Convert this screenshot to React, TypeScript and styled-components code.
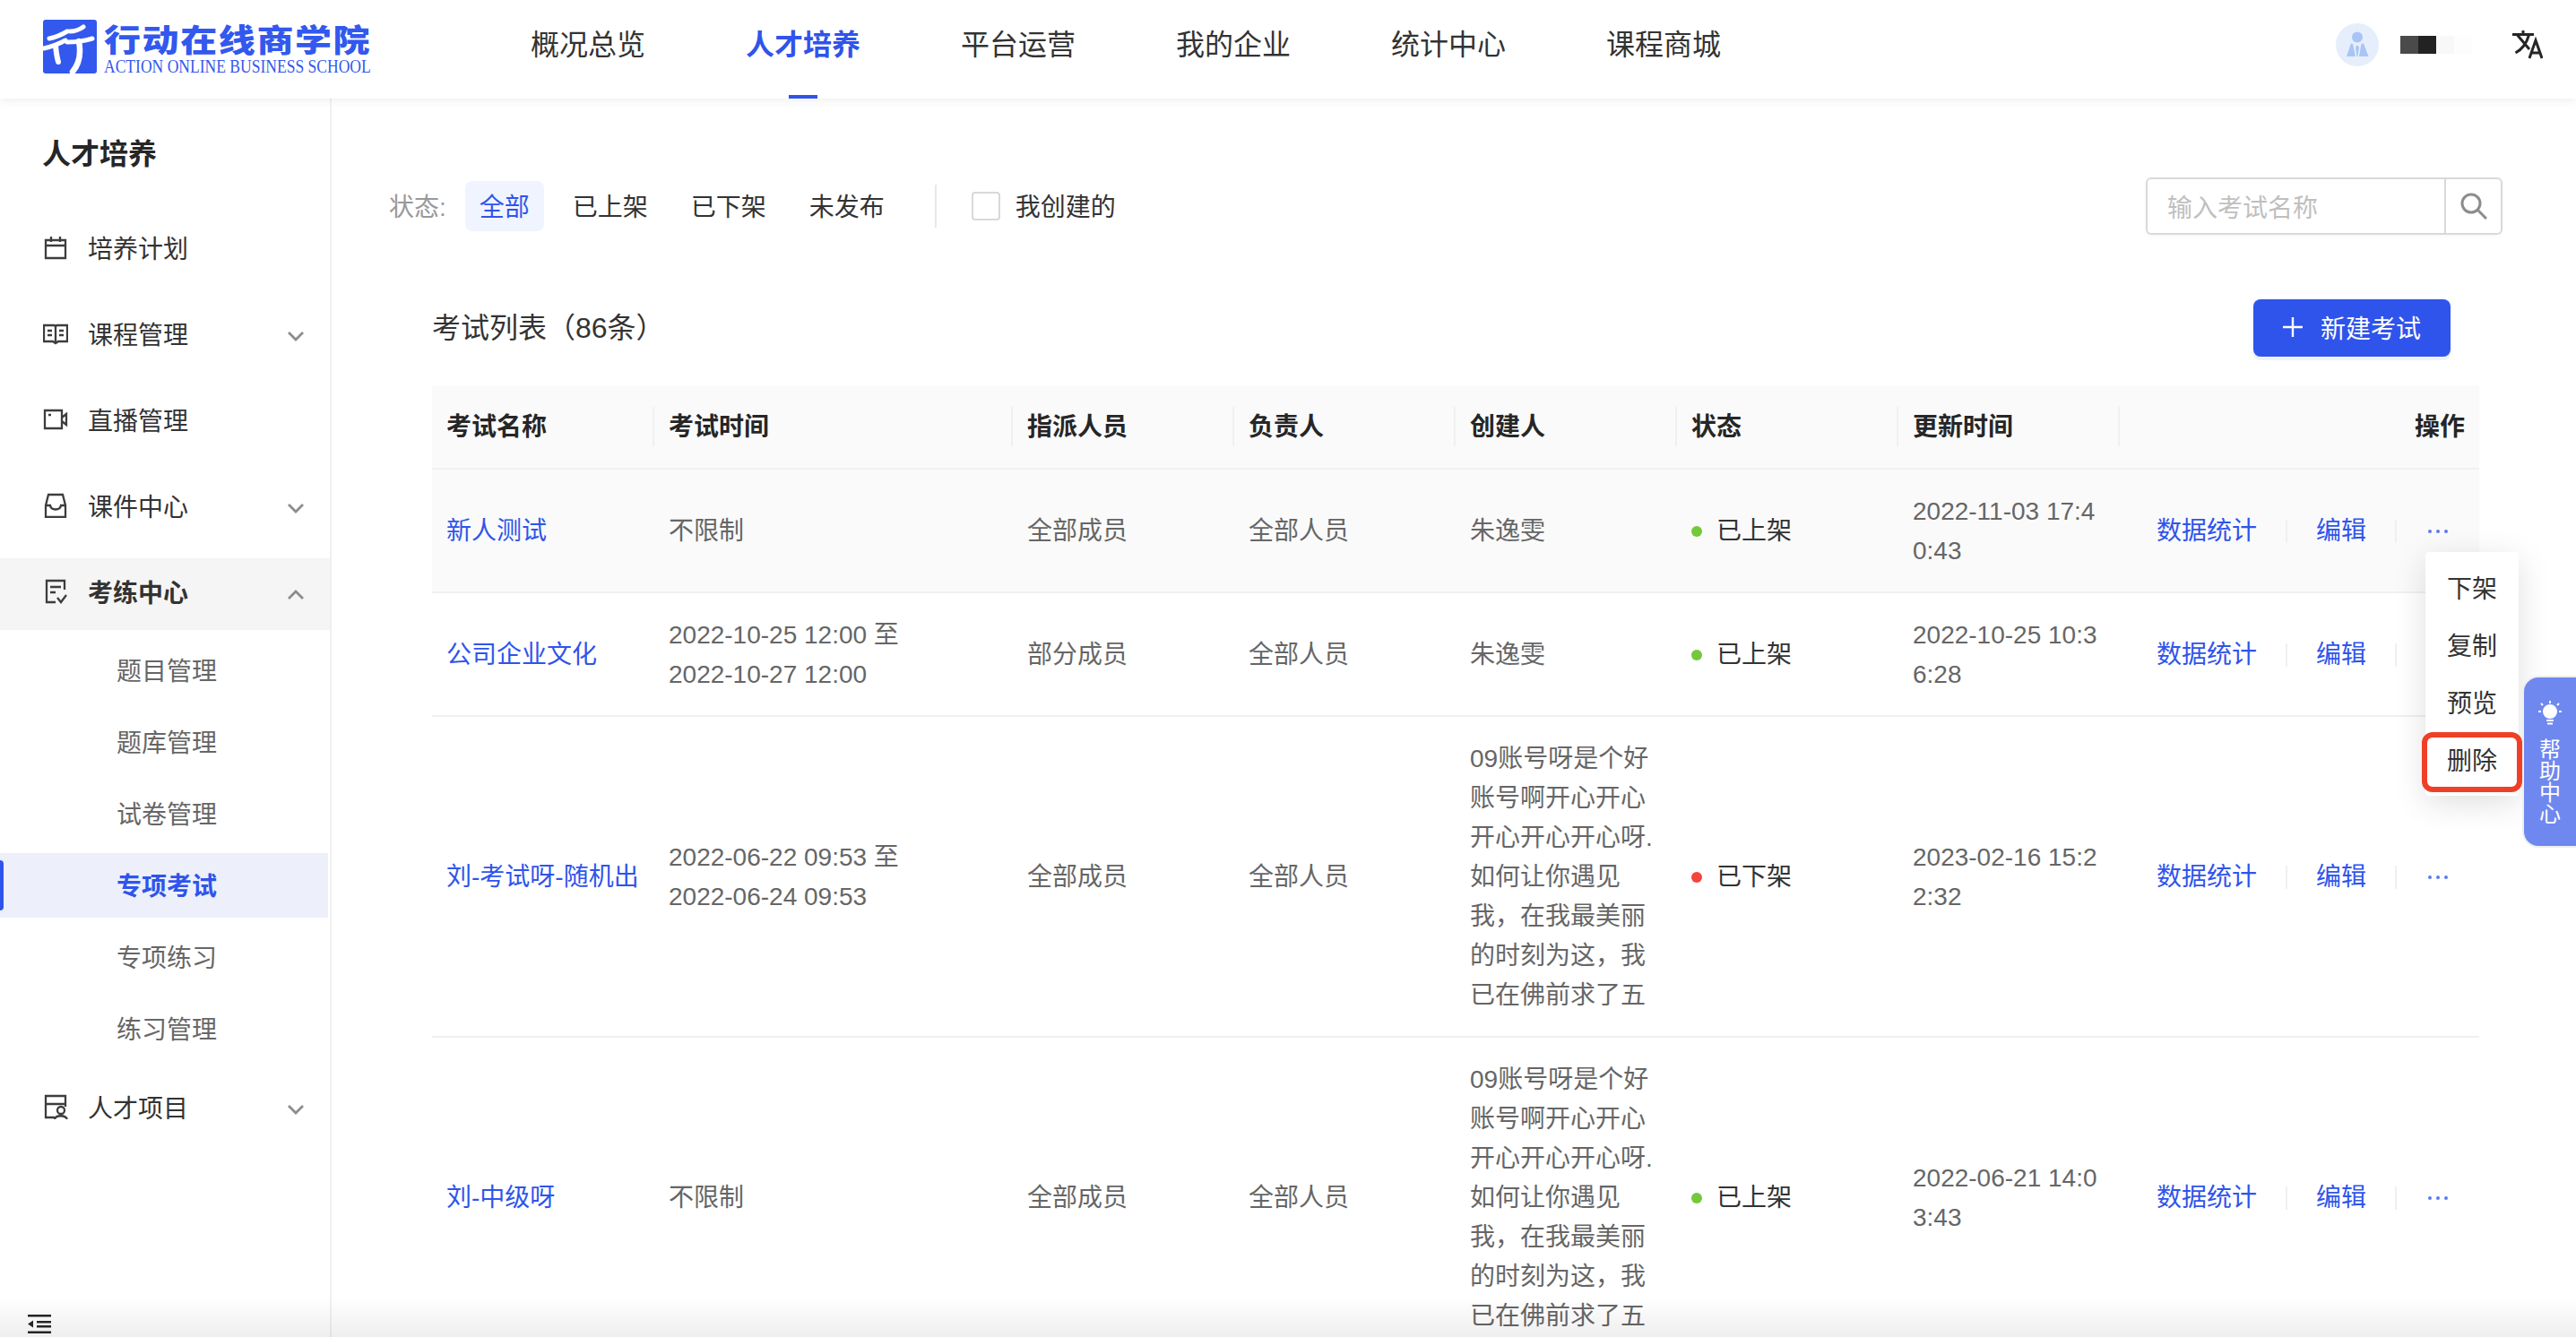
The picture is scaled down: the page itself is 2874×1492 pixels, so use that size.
import React from 'react';
import styled, { createGlobalStyle } from 'styled-components';

const blue = '#2f54eb';

const Global = createGlobalStyle`
  html, body { margin: 0; padding: 0; height: 100%; overflow: hidden; background: #fff; }
  body { font-family: "Liberation Sans", "Noto Sans CJK SC", sans-serif; font-size: 28px; color: #333; -webkit-font-smoothing: antialiased; }
  #root { height: 100%; }
  * { box-sizing: border-box; }
`;

const Page = styled.div`
  position: relative; height: 1492px; display: flex; flex-direction: column; overflow: hidden;
`;
const BottomFade = styled.div`
  position: absolute; left: 0; right: 0; bottom: 0; height: 44px; pointer-events: none; z-index: 3;
  background: linear-gradient(rgba(0,0,0,0), rgba(0,0,0,.065));
`;

const Header = styled.header`
  height: 110px; flex: none; display: flex; align-items: center; padding: 0 37px 0 48px; background: #fff;
  box-shadow: 0 2px 10px rgba(0,0,0,.07); position: relative; z-index: 2;
`;
const Logo = styled.div`
  width: 544px; flex: none; display: flex; align-items: center; gap: 8px; padding-bottom: 6px;
`;
const LogoText = styled.div`
  display: flex; flex-direction: column; width: 298px; height: 60px; padding-top: 2px; color: #3358ee;
`;
const LogoCn = styled.div`
  font-family: "Noto Sans CJK SC", sans-serif; font-weight: 900; font-size: 41px; line-height: 38px; height: 38px;
  letter-spacing: 1.6px; white-space: nowrap; transform: scaleY(.86);
`;
const LogoEn = styled.div`
  font-family: "Liberation Serif", serif; font-size: 20px; line-height: 20px; white-space: nowrap;
  transform: scaleX(.877); transform-origin: left center; margin-top: 2px;
`;
const TopNav = styled.nav`
  display: flex; gap: 112px;
`;
const TopItem = styled.a<{ $active?: boolean }>`
  position: relative; height: 110px; width: 128px; display: flex; align-items: center; justify-content: center; padding-bottom: 16px;
  font-size: 32px; white-space: nowrap; color: ${p => (p.$active ? blue : '#333')}; font-weight: ${p => (p.$active ? 600 : 400)};
  ${p => p.$active && `&::after { content: ""; position: absolute; left: 48px; bottom: 0; width: 32px; height: 4px; background: ${blue}; }`}
`;
const UserArea = styled.div`
  margin-left: auto; display: flex; align-items: center; padding-bottom: 10px;
`;
const Avatar = styled.div`
  width: 48px; height: 48px; border-radius: 50%; background: #e6eefc; display: flex;
`;
const Mosaic = styled.div`
  display: flex; margin: 0 45px 0 24px;
`;
const Tile = styled.span<{ $c: string }>`
  width: 20px; height: 20px; background: ${p => p.$c};
`;

const Body = styled.div`
  flex: 1; display: flex; min-height: 0;
`;
const Sidebar = styled.aside`
  width: 370px; flex: none; border-right: 2px solid #f0f0f0; padding-top: 40px; display: flex; flex-direction: column;
`;
const SideTitle = styled.h2`
  margin: 0 0 45px 47px; font-size: 32px; line-height: 44px; font-weight: 700; color: #262626;
`;
const SideNav = styled.div`
  display: flex; flex-direction: column; gap: 16px;
`;
const SideItem = styled.div<{ $open?: boolean }>`
  height: 80px; display: flex; align-items: center; gap: 22px; padding: 0 29px 6px 48px;
  color: #333; font-weight: ${p => (p.$open ? 700 : 400)};
  background: ${p => (p.$open ? '#f5f5f5' : 'transparent')};
`;
const Chevron = styled.svg`
  margin: 6px 0 0 auto; flex: none;
`;
const SubList = styled.div`
  display: flex; flex-direction: column; gap: 8px; padding-top: 9px; margin-bottom: -2px; margin-right: 2px;
`;
const SubItem = styled.div<{ $active?: boolean }>`
  position: relative; height: 72px; display: flex; align-items: center; padding: 0 0 3px 130px;
  color: ${p => (p.$active ? blue : '#666')}; font-weight: ${p => (p.$active ? 700 : 400)};
  background: ${p => (p.$active ? '#edf0fb' : 'transparent')};
  ${p => p.$active && `&::before { content: ""; position: absolute; left: 0; top: 8px; width: 4px; height: 56px; background: ${blue}; border-radius: 0 4px 4px 0; }`}
`;
const Collapse = styled.div`
  margin-top: auto; padding: 0 0 4px 31px; display: flex;
`;

const Main = styled.main`
  flex: 1; min-width: 0; padding: 88px 82px 0 64px; overflow: hidden;
`;
const FilterBar = styled.div`
  display: flex; align-items: center; height: 64px;
`;
const FilterLabel = styled.span`
  color: #999; margin-right: 21px; padding-bottom: 2px;
`;
const Chips = styled.div`
  display: flex; gap: 16px;
`;
const Chip = styled.span<{ $active?: boolean }>`
  height: 56px; padding: 0 16px 2px; display: flex; align-items: center; border-radius: 8px;
  color: ${p => (p.$active ? blue : '#333')}; background: ${p => (p.$active ? '#f0f4fe' : 'transparent')};
`;
const VLine = styled.span`
  width: 2px; height: 48px; background: #e8e8e8; margin: 0 39px 0 40px;
`;
const CheckBox = styled.span`
  width: 32px; height: 32px; border: 2px solid #d9d9d9; border-radius: 4px; margin-right: 17px;
`;
const CheckLabel = styled.span`
  padding-bottom: 2px;
`;
const SearchBox = styled.div`
  margin-left: auto; width: 398px; height: 64px; display: flex; border: 2px solid #d9d9d9; border-radius: 6px;
  box-shadow: 0 2px 4px rgba(0,0,0,.03);
`;
const SearchInput = styled.input`
  flex: 1; min-width: 0; border: 0; outline: 0; padding: 6px 0 0 22px; font: inherit; background: transparent; color: #333;
  &::placeholder { color: #bfbfbf; opacity: 1; }
`;
const SearchBtn = styled.div`
  width: 63px; flex: none; border-left: 2px solid #d9d9d9; display: flex; align-items: center; justify-content: center;
`;

const ListArea = styled.section`
  margin: 72px 26px 0 48px;
`;
const ListHead = styled.div`
  display: flex; align-items: center; justify-content: space-between; height: 64px; padding-right: 32px; margin-bottom: 32px;
`;
const ListTitle = styled.h3`
  margin: 0; padding-bottom: 7px; font-size: 32px; font-weight: 400; color: #333;
`;
const PrimaryBtn = styled.button`
  width: 220px; height: 64px; border: 0; padding: 0 0 2px; border-radius: 8px; background: ${blue}; color: #fff; font: inherit;
  display: flex; align-items: center; justify-content: center; gap: 20px; box-shadow: 0 4px 0 #f0f2f5;
`;

const cols = '246px 400px 247px 247px 247px 247px 247px 403px';
const HeadRow = styled.div`
  display: grid; grid-template-columns: ${cols}; align-items: center; padding: 24px 0; background: #fafafa; border-bottom: 2px solid #f0f0f0;
`;
const HeadCell = styled.div<{ $line?: boolean; $right?: boolean }>`
  height: 44px; line-height: 46px; padding: 0 16px; font-weight: 700; color: #262626;
  border-left: ${p => (p.$line ? '2px solid #f0f0f0' : '0')}; text-align: ${p => (p.$right ? 'right' : 'left')};
`;
const Row = styled.div<{ $hover?: boolean }>`
  display: grid; grid-template-columns: ${cols}; align-items: center; padding: 25px 0 23px; border-bottom: 2px solid #f0f0f0;
  background: ${p => (p.$hover ? '#fafafa' : '#fff')};
`;
const Cell = styled.div`
  padding: 0 16px 0 18px; line-height: 44px; color: #666; word-break: break-all;
`;
const TimeCell = styled(Cell)`
  white-space: pre-line;
`;
const NameLink = styled.div`
  padding-left: 16px; line-height: 44px; color: ${blue}; white-space: nowrap;
`;
const StatusCell = styled.div`
  padding-left: 18px; display: flex; align-items: center; gap: 16px; color: #333; line-height: 44px;
`;
const Dot = styled.span<{ $c: string }>`
  width: 12px; height: 12px; border-radius: 50%; background: ${p => p.$c};
`;
const Ops = styled.div`
  padding-left: 43px; display: flex; align-items: center; gap: 32px; color: ${blue}; line-height: 44px; white-space: nowrap;
`;
const OpLine = styled.span`
  width: 2px; height: 26px; background: #f0f0f0;
`;
const More = styled.span`
  display: flex; gap: 5px; margin-left: 3px;
`;
const MoreDot = styled.span`
  width: 4px; height: 4px; border-radius: 50%; background: #5b7bf0;
`;

const Dropdown = styled.div`
  position: absolute; left: 2706px; top: 616px; width: 104px; padding: 8px 0; background: #fff; border-radius: 4px; z-index: 4;
  box-shadow: 0 8px 36px rgba(0,0,0,.13);
`;
const DropItem = styled.div<{ $marked?: boolean }>`
  position: relative; height: 64px; display: flex; align-items: center; justify-content: center; padding-bottom: 3px; color: #333;
  ${p => p.$marked && `&::after { content: ""; position: absolute; left: -4px; right: -4px; top: 1px; bottom: -4px; border: 6px solid #ee4027; border-radius: 12px; }`}
`;
const HelpTab = styled.div`
  position: absolute; right: 0; top: 754px; width: 60px; height: 192px; z-index: 4; background: #6f88ef; color: #fff;
  border: 2px solid #eee; border-right: 0; border-radius: 18px 0 0 18px; display: flex; flex-direction: column; align-items: center;
  padding-top: 26px; font-size: 24px; line-height: 24px;
`;
const HelpText = styled.div`
  width: 24px; margin-top: 15px; text-align: center; word-break: break-all;
`;

const Arrow = ({ up }: { up?: boolean }) => (
  <Chevron width="18" height="11" viewBox="0 0 18 11" fill="none" stroke="#8c8c8c" strokeWidth="2.8">
    <path d={up ? 'M1 10l8-8 8 8' : 'M1 1l8 8 8-8'} />
  </Chevron>
);

const Ico = ({ children }: { children: React.ReactNode }) => (
  <svg width="28" height="28" viewBox="0 0 28 28" fill="none" stroke="#3d3d3d" strokeWidth="2.3" style={{ flex: 'none' }}>{children}</svg>
);

const icons = {
  plan: <Ico><path d="M3 6h22v20H3zM3 12h22M9 2v6M19 2v6" /></Ico>,
  course: <Ico><path d="M1 5h11c1 0 2 1 2 2 0-1 1-2 2-2h11v18H17l-3 2-3-2H1zM14 7v17M5 11h5M5 16h5M18 11h5M18 16h5" /></Ico>,
  live: <Ico><path d="M2 4h19v20H2zM6 9h3M21 12l5-4v12l-5-4" /></Ico>,
  ware: <Ico><path d="M3 14 6 2h16l3 12v13H3zM3 14h5c1 6 11 6 12 0h5" /></Ico>,
  exam: <Ico><path d="M24 12V2H4v24h10M8 9h12M8 15h6M16 21l4 5 6-8" /></Ico>,
  proj: <Ico><path d="M13 26H3V2h22v12M3 11h22M13 28c1-5 12-5 14 0" /><circle cx="20" cy="18" r="4" /></Ico>,
};

const LogoMark = () => (
  <svg width="60" height="60" viewBox="0 0 60 60" style={{ flex: 'none' }}>
    <rect width="60" height="60" rx="3" fill="#3358ee" />
    <g fill="none" stroke="#fff" strokeLinecap="round">
      <path d="M7 21 Q17 19 27 13" strokeWidth="5" />
      <path d="M1 32 Q14 29 25 23" strokeWidth="5" />
      <path d="M14 29 Q15 40 17 47" strokeWidth="6" />
      <path d="M30 13 Q38 13 45 8" strokeWidth="5" />
      <path d="M27 25 Q42 25 55 21" strokeWidth="5" />
      <path d="M40 24 Q44 45 33 58" strokeWidth="6.5" />
    </g>
  </svg>
);

const creator = '09账号呀是个好账号啊开心开心开心开心开心呀.如何让你遇见我，在我最美丽的时刻为这，我已在佛前求了五';

const rows = [
  { name: '新人测试', time: '不限制', who: '全部成员', owner: '全部人员', by: '朱逸雯', on: true, up: '2022-11-03 17:40:43', hover: true },
  { name: '公司企业文化', time: '2022-10-25 12:00 至\n2022-10-27 12:00', who: '部分成员', owner: '全部人员', by: '朱逸雯', on: true, up: '2022-10-25 10:36:28' },
  { name: '刘-考试呀-随机出', time: '2022-06-22 09:53 至\n2022-06-24 09:53', who: '全部成员', owner: '全部人员', by: creator, on: false, up: '2023-02-16 15:22:32' },
  { name: '刘-中级呀', time: '不限制', who: '全部成员', owner: '全部人员', by: creator, on: true, up: '2022-06-21 14:03:43' },
];

export default function App() {
  return (
    <Page>
      <Global />
      <Header>
        <Logo>
          <LogoMark />
          <LogoText>
            <LogoCn>行动在线商学院</LogoCn>
            <LogoEn>ACTION ONLINE BUSINESS SCHOOL</LogoEn>
          </LogoText>
        </Logo>
        <TopNav>
          {['概况总览', '人才培养', '平台运营', '我的企业', '统计中心', '课程商城'].map((t, i) => (
            <TopItem key={t} $active={i === 1}>{t}</TopItem>
          ))}
        </TopNav>
        <UserArea>
          <Avatar>
            <svg width="48" height="48" viewBox="0 0 48 48" fill="#a9c4f5">
              <circle cx="24" cy="15.5" r="6" />
              <path d="M17 22.5 12 37h10l-3-14zM31 22.5 36.500 37H26l2.500-14zM24 24l2 3-1.500 10h-1L22 27z" />
            </svg>
          </Avatar>
          <Mosaic>
            <Tile $c="#4a4a4a" /><Tile $c="#222222" /><Tile $c="#f8f8f8" /><Tile $c="#fdfdfd" />
          </Mosaic>
          <svg width="34" height="32" viewBox="0 0 34 32" fill="none" stroke="#262626" strokeWidth="3">
            <path d="M0 4.500h24M12 0v4.500M5.500 5 19 21M18.500 5C16 14 11 21 3.500 25M19 31 26 11l7 20M21.500 25h9" />
          </svg>
        </UserArea>
      </Header>
      <Body>
        <Sidebar>
          <SideTitle>人才培养</SideTitle>
          <SideNav>
            <SideItem>{icons.plan}培养计划</SideItem>
            <SideItem>{icons.course}课程管理<Arrow /></SideItem>
            <SideItem>{icons.live}直播管理</SideItem>
            <SideItem>{icons.ware}课件中心<Arrow /></SideItem>
            <div>
              <SideItem $open>{icons.exam}考练中心<Arrow up /></SideItem>
              <SubList>
                {['题目管理', '题库管理', '试卷管理', '专项考试', '专项练习', '练习管理'].map((t, i) => (
                  <SubItem key={t} $active={i === 3}>{t}</SubItem>
                ))}
              </SubList>
            </div>
            <SideItem>{icons.proj}人才项目<Arrow /></SideItem>
          </SideNav>
          <Collapse>
            <svg width="26" height="21" viewBox="0 0 26 21" fill="#262626" stroke="none">
              <path d="M0 0h26v2.500H0zM10 7h16v2.500H10zM10 12h16v2.500H10zM0 18.500h26V21H0zM0 10.500 6 6.500v8z" />
            </svg>
          </Collapse>
        </Sidebar>
        <Main>
          <FilterBar>
            <FilterLabel>状态:</FilterLabel>
            <Chips>
              {['全部', '已上架', '已下架', '未发布'].map((t, i) => (
                <Chip key={t} $active={i === 0}>{t}</Chip>
              ))}
            </Chips>
            <VLine />
            <CheckBox />
            <CheckLabel>我创建的</CheckLabel>
            <SearchBox>
              <SearchInput placeholder="输入考试名称" readOnly />
              <SearchBtn>
                <svg width="30" height="30" viewBox="0 0 30 30" fill="none" stroke="#8c8c8c" strokeWidth="3">
                  <circle cx="12" cy="12" r="10" />
                  <path d="m19 19 10 10" />
                </svg>
              </SearchBtn>
            </SearchBox>
          </FilterBar>
          <ListArea>
            <ListHead>
              <ListTitle>考试列表（86条）</ListTitle>
              <PrimaryBtn>
                <svg width="22" height="22" viewBox="0 0 22 22" stroke="#fff" strokeWidth="2.400"><path d="M11 0v22M0 11h22" /></svg>
                新建考试
              </PrimaryBtn>
            </ListHead>
            <HeadRow>
              <HeadCell>考试名称</HeadCell>
              <HeadCell $line>考试时间</HeadCell>
              <HeadCell $line>指派人员</HeadCell>
              <HeadCell $line>负责人</HeadCell>
              <HeadCell $line>创建人</HeadCell>
              <HeadCell $line>状态</HeadCell>
              <HeadCell $line>更新时间</HeadCell>
              <HeadCell $line $right>操作</HeadCell>
            </HeadRow>
            {rows.map(r => (
              <Row key={r.name} $hover={r.hover}>
                <NameLink>{r.name}</NameLink>
                <TimeCell>{r.time}</TimeCell>
                <Cell>{r.who}</Cell>
                <Cell>{r.owner}</Cell>
                <Cell>{r.by}</Cell>
                <StatusCell><Dot $c={r.on ? '#73c83c' : '#f5443c'} />{r.on ? '已上架' : '已下架'}</StatusCell>
                <Cell>{r.up}</Cell>
                <Ops>
                  数据统计<OpLine />编辑<OpLine />
                  <More><MoreDot /><MoreDot /><MoreDot /></More>
                </Ops>
              </Row>
            ))}
          </ListArea>
        </Main>
      </Body>
      <Dropdown>
        <DropItem>下架</DropItem>
        <DropItem>复制</DropItem>
        <DropItem>预览</DropItem>
        <DropItem $marked>删除</DropItem>
      </Dropdown>
      <HelpTab>
        <svg width="26" height="28" viewBox="0 0 26 28" fill="none" stroke="#fff" strokeWidth="2">
          <path d="M13 0v3M3 3l2 2M23 3l-2 2M0 12h3M23 12h3" />
          <circle cx="13" cy="12" r="7" fill="#fff" />
          <path d="M9 22h8M10 25.500h6" />
        </svg>
        <HelpText>帮助中心</HelpText>
      </HelpTab>
      <BottomFade />
    </Page>
  );
}
